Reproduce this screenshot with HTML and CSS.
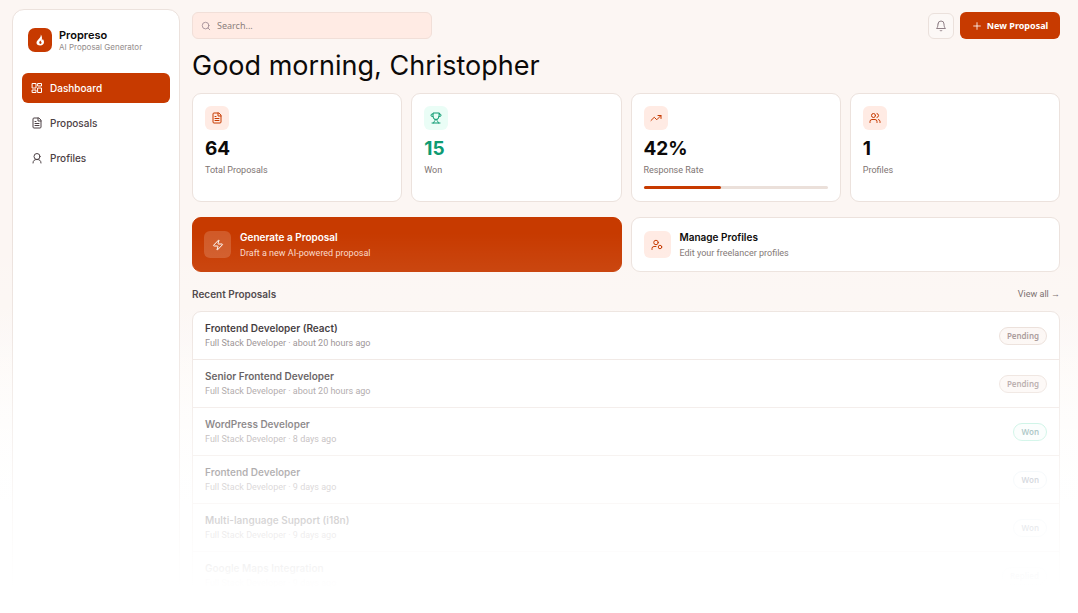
FILE: index.html
```html
<!DOCTYPE html>
<html lang="en">
<head>
<meta charset="utf-8">
<meta name="viewport" content="width=device-width, initial-scale=1">
<title>Propreso</title>
<link rel="stylesheet" href="styles.css">
</head>
<body>
<div class="app">
  <aside class="sidebar">
    <div class="brand">
      <span class="logo"><svg viewBox="0 0 24 24"><path fill="#fff" d="M13.500 1c.8 4-1.500 6-4 9C7 13 5 14.500 5 17.500 5 21 8 23 12.500 23S20 20 20 16.500c0-3-1.500-5-2.500-7-.3 2-1 3-2 3.500.8-4 .8-9-2-12z"/><path fill="#c73a00" d="M13 13c-1.500 1.500-2.500 2.500-2.500 4.200 0 1.500 1 2.600 2.300 2.600s2.300-1 2.300-2.300c0-1.500-1.300-2.500-2.100-4.500z"/></svg></span>
      <div><div class="brand-name">Propreso</div><div class="brand-sub">AI Proposal Generator</div></div>
    </div>
    <nav class="nav">
      <a class="nav-link active" href="#"><svg class="icon" viewBox="0 0 24 24"><rect x="3" y="3" width="7" height="9"/><rect x="14" y="3" width="7" height="5"/><rect x="14" y="12" width="7" height="9"/><rect x="3" y="16" width="7" height="5"/></svg>Dashboard</a>
      <a class="nav-link" href="#"><svg class="icon" viewBox="0 0 24 24"><path d="M15 2H6a2 2 0 0 0-2 2v16a2 2 0 0 0 2 2h12a2 2 0 0 0 2-2V7zM14 2v6h6M8 9h2M8 13h8M8 17h8"/></svg>Proposals</a>
      <a class="nav-link" href="#"><svg class="icon" viewBox="0 0 24 24"><circle cx="12" cy="9" r="6"/><path d="M4 22c0-5 3-7 8-7s8 2 8 7"/></svg>Profiles</a>
    </nav>
  </aside>
  <main class="main">
    <header class="topbar">
      <label class="search"><svg class="icon" viewBox="0 0 24 24"><circle cx="11" cy="11" r="8"/><path d="m21 21-4.300-4.300"/></svg><input type="search" placeholder="Search..." aria-label="Search"></label>
      <div class="top-actions">
        <button class="bell" aria-label="Notifications"><svg class="icon" viewBox="0 0 24 24"><path d="M6 8a6 6 0 0 1 12 0c0 7 3 9 3 9H3s3-2 3-9M10.300 21a1.940 1.940 0 0 0 3.400 0"/></svg></button>
        <button class="new"><svg class="icon" viewBox="0 0 24 24"><path d="M4 12h16M12 4v16"/></svg>New Proposal</button>
      </div>
    </header>
    <h1 class="greeting">Good morning, Christopher</h1>
    <section class="stats">
      <article class="card stat"><span class="tile"><svg class="icon" viewBox="0 0 24 24"><path d="M15 2H6a2 2 0 0 0-2 2v16a2 2 0 0 0 2 2h12a2 2 0 0 0 2-2V7zM14 2v6h6M8 9h2M8 13h8M8 17h8"/></svg></span><div class="value">64</div><div class="label">Total Proposals</div></article>
      <article class="card stat won"><span class="tile"><svg class="icon" viewBox="0 0 24 24"><path d="M6 9H4.500a2.500 2.500 0 0 1 0-5H6M18 9h1.500a2.500 2.500 0 0 0 0-5H18M4 22h16M10 14.700V17c0 1-2 1.500-3 5M14 14.700V17c0 1 2 1.500 3 5M18 2H6v7a6 6 0 0 0 12 0z"/></svg></span><div class="value">15</div><div class="label">Won</div></article>
      <article class="card stat"><span class="tile"><svg class="icon" viewBox="0 0 24 24"><path d="m2 17 6.500-6.500 5 5L22 7M16 7h6v6"/></svg></span><div class="value">42%</div><div class="label">Response Rate</div><div class="bar"><div class="fill"></div></div></article>
      <article class="card stat"><span class="tile"><svg class="icon" viewBox="0 0 24 24"><circle cx="9" cy="7" r="4"/><path d="M2 21v-2a4 4 0 0 1 4-4h6a4 4 0 0 1 4 4v2M16 3.100a4 4 0 0 1 0 7.800M22 21v-2a4 4 0 0 0-3-3.900"/></svg></span><div class="value">1</div><div class="label">Profiles</div></article>
    </section>
    <section class="actions">
      <a class="card action primary" href="#"><span class="tile"><svg class="icon" viewBox="0 0 24 24"><path d="M4 14a1 1 0 0 1-.8-1.600l9.900-10.200a.5.5 0 0 1 .9.500L12 8.700a1 1 0 0 0 1 1.300h7a1 1 0 0 1 .8 1.600l-9.900 10.200a.5.5 0 0 1-.9-.5l2-6A1 1 0 0 0 11 14z"/></svg></span><span class="action-text"><strong>Generate a Proposal</strong><span>Draft a new AI-powered proposal</span></span></a>
      <a class="card action" href="#"><span class="tile"><svg class="icon" viewBox="0 0 24 24"><circle cx="10" cy="7" r="4.500"/><path d="M2 21v-2a4 4 0 0 1 4-4h4"/><circle cx="18" cy="16" r="3.500"/></svg></span><span class="action-text"><strong>Manage Profiles</strong><span>Edit your freelancer profiles</span></span></a>
    </section>
    <div class="section-head"><h2>Recent Proposals</h2><a href="#">View all →</a></div>
    <ul class="card list">
      <li><div><h3>Frontend Developer (React)</h3><p>Full Stack Developer · about 20 hours ago</p></div><span class="badge">Pending</span></li>
      <li><div><h3>Senior Frontend Developer</h3><p>Full Stack Developer · about 20 hours ago</p></div><span class="badge">Pending</span></li>
      <li><div><h3>WordPress Developer</h3><p>Full Stack Developer · 8 days ago</p></div><span class="badge green">Won</span></li>
      <li><div><h3>Frontend Developer</h3><p>Full Stack Developer · 9 days ago</p></div><span class="badge faint">Won</span></li>
      <li><div><h3>Multi-language Support (i18n)</h3><p>Full Stack Developer · 9 days ago</p></div><span class="badge faint">Won</span></li>
      <li><div><h3>Google Maps Integration</h3><p>Full Stack Developer · 9 days ago</p></div><span class="badge faint">Replied</span></li>
    </ul>
  </main>
  <div class="fade"></div>
</div>
</body>
</html>
```
FILE: styles.css
```css
* { box-sizing: border-box; }
body { margin: 0; background: #fcf6f3; color: #0c0a09; font: 9px/12px Roboto, "Noto Sans", sans-serif; }
h1, h2, h3, p, ul { margin: 0; padding: 0; }
a { color: inherit; text-decoration: none; }
button, input { font: inherit; }
.app { position: relative; display: flex; gap: 12px; height: 100vh; padding: 9px 18px 0 12px; overflow: hidden; background: linear-gradient(to bottom, #fcf6f3 50%, #fff 82%); }
.fade { position: absolute; inset: 0; pointer-events: none; background: linear-gradient(to bottom, rgba(255,255,255,0) 38%, rgba(255,255,255,.16) 54%, rgba(255,255,255,.5) 70%, rgba(255,255,255,.76) 82%, rgba(255,255,255,.93) 91%, #fff 96%); }
.icon { width: 12px; height: 12px; flex: none; fill: none; stroke: currentColor; stroke-width: 2; stroke-linecap: round; stroke-linejoin: round; }
.sidebar { flex: 0 0 168px; padding: 18px 9px; background: #fff; border: 1px solid #ece2dd; border-radius: 12px 12px 0 0; }
.brand { display: flex; align-items: center; gap: 7px; padding: 0 6px; }
.logo { display: grid; place-items: center; width: 24px; height: 24px; background: #c73a00; border-radius: 7px; }
.logo svg { width: 12px; height: 12px; }
.brand-name { font: 600 11px/14px Inter, sans-serif; }
.brand-sub { font: 8px/10px Inter, sans-serif; color: #948d8c; }
.nav { display: grid; gap: 5px; margin-top: 21px; }
.nav-link { display: flex; align-items: center; gap: 7px; height: 30px; padding: 0 9px; border-radius: 6px; color: #4c4145; font: 500 10px/14px Inter, sans-serif; }
.nav-link.active { color: #fff; background: #c73a00; }
.main { flex: 1; min-width: 0; padding-top: 3px; }
.topbar { display: flex; justify-content: space-between; align-items: center; }
.search { display: flex; align-items: center; gap: 6px; width: 240px; height: 27px; padding: 0 8px; color: #9b8790; background: #ffebe4; border: 1px solid #f1dfd8; border-radius: 6px; }
.search .icon { width: 10px; height: 10px; }
.search input { flex: 1; min-width: 0; padding: 0; border: 0; outline: 0; background: none; font: 9px/14px "Noto Sans", sans-serif; }
.search input::placeholder { color: #8b7f7d; opacity: 1; }
.top-actions { display: flex; align-items: center; gap: 6px; }
.bell { display: grid; place-items: center; width: 26px; height: 26px; padding: 0; color: #8f7f86; background: #fcf8f6; border: 1px solid #ebe1dc; border-radius: 6px; }
.new { display: flex; align-items: center; justify-content: center; gap: 5px; width: 100px; height: 27px; padding: 0; color: #fff; background: #c73a00; border: 0; border-radius: 6px; font: 700 9px/14px "Noto Sans", sans-serif; }
.new .icon { width: 10px; height: 10px; }
.greeting { margin: 9px 0; font: 400 27px/36px Inter, sans-serif; }
.card { background: #fff; border: 1px solid #ece2dd; border-radius: 9px; }
.stats { display: grid; grid-template-columns: repeat(4, 1fr); gap: 9px; }
.stat { height: 109px; padding: 12px; }
.tile { display: grid; place-items: center; flex: none; width: 24px; height: 24px; color: #c73a00; background: #ffebe4; border-radius: 6px; }
.value { margin-top: 7px; font: 700 19px/24px Inter, sans-serif; }
.label { margin-top: 2px; line-height: 14px; color: #7e7472; }
.won .tile { color: #0d9b72; background: #eafdf6; }
.won .value { color: #0d9b72; }
.bar { height: 3px; margin-top: 9px; background: #ebe0da; border-radius: 2px; }
.fill { width: 42%; height: 100%; background: #c73a00; border-radius: 2px; }
.actions { display: grid; grid-template-columns: 1fr 1fr; gap: 9px; margin-top: 15px; }
.action { display: flex; align-items: center; gap: 9px; height: 55px; padding: 0 12px; color: #0c0a09; }
.action .tile { width: 27px; height: 27px; }
.action-text { display: grid; gap: 2px; }
.action-text strong { font: 600 10px/14px Inter, sans-serif; }
.action-text span { line-height: 14px; color: #7e7472; }
.primary { padding: 0 11px; color: #fff; background: #c73a00; border-color: #c73a00; }
.primary .tile { color: #fff; background: #d15a28; }
.primary .action-text span { color: #fbd9c8; }
.section-head { display: flex; align-items: center; justify-content: space-between; height: 14px; margin: 15px 0 10px; }
.section-head h2 { font: 600 10px/14px Inter, sans-serif; color: #3f373a; }
.section-head a { color: #6d6261; }
.list { list-style: none; }
.list li { display: flex; align-items: center; justify-content: space-between; height: 48px; padding: 0 12px; border-bottom: 1px solid #ece2dd; }
.list h3 { font: 600 10px/14px Inter, sans-serif; color: #1f181b; }
.list p { margin-top: 1px; line-height: 14px; color: #857a7c; }
.badge { padding: 1px 7px; border: 1px solid #e9dcd5; border-radius: 9px; color: #988786; background: #fcf6f3; font: 600 8px/14px "Noto Sans", sans-serif; }
.green { color: #5a8d8c; border-color: #a5ecd3; background: #f7fdfb; }
.faint { color: #7d8798; border-color: #e3edf3; background: #fff; }
```
